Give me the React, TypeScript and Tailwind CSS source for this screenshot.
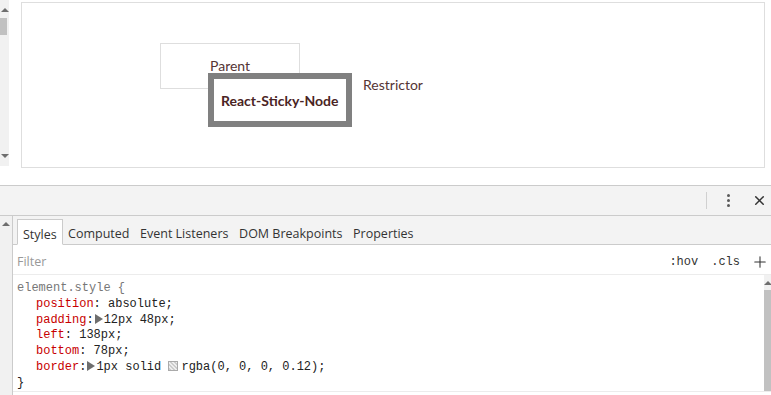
import { X, Plus } from "lucide-react";

const tabs = ["Styles", "Computed", "Event Listeners", "DOM Breakpoints", "Properties"];

const rules: [string, React.ReactNode][] = [
  ["position", <>: absolute;</>],
  [
    "padding",
    <>
      :<Arrow />12px 48px;
    </>,
  ],
  ["left", <>: 138px;</>],
  ["bottom", <>: 78px;</>],
  [
    "border",
    <>
      :<Arrow />1px solid <Swatch />rgba(0, 0, 0, 0.12);
    </>,
  ],
];

function Arrow() {
  return <span className="inline-block w-0 h-0 border-y-[5px] border-y-transparent border-l-[8px] border-l-[#6e6e6e] mx-[1px] align-[-1px]" />;
}

function Swatch() {
  return (
    <span className="inline-block w-[10px] h-[10px] mr-[3px] border border-[#aaa] bg-[linear-gradient(45deg,#ccc_25%,#eee_25%,#eee_50%,#ccc_50%,#ccc_75%,#eee_75%)] bg-[length:4px_4px] align-[-1px]" />
  );
}

function ScrollUp({ className = "" }: { className?: string }) {
  return <span className={`block w-0 h-0 border-x-[4px] border-x-transparent border-b-[4px] border-b-[#6e6e6e] ${className}`} />;
}

function Demo() {
  return (
    <div className="flex h-[185px] bg-white">
      <div className="w-[9px] h-[166px] bg-[#f1f1f1] flex flex-col">
        <ScrollUp className="mt-[8px] ml-[1px]" />
        <div className="mt-[6px] w-[7px] h-[17px] bg-[#c1c1c1]" />
        <div className="flex-1" />
        <span className="block w-0 h-0 border-x-[4px] border-x-transparent border-t-[4px] border-t-[#6e6e6e] mb-[8px] ml-[1px]" />
      </div>
      <div className="ml-[12px] mt-[2px] w-[744px] h-[166px] border border-[#dedede] relative font-['Lato',sans-serif] text-[14px] text-[#553535]">
        <div className="absolute left-[138px] top-[40px] w-[140px] h-[46px] border border-[#dedede] flex items-center pl-[49px] pb-[1px]">
          Parent
        </div>
        <div className="absolute left-[186px] top-[70px] w-[144px] h-[54px] border-[6px] border-[#808080] bg-white flex items-center pl-[7px] font-bold text-[#4a2424]">
          React-Sticky-Node
        </div>
        <div className="absolute left-[341px] top-[71px]">Restrictor</div>
      </div>
    </div>
  );
}

function Toolbar() {
  return (
    <div className="h-[31px] border-t border-[#cbcbcb] border-b bg-[#f3f3f3] flex items-center justify-end">
      <div className="w-px h-[17px] bg-[#d0d0d0] mr-[20px]" />
      <div className="flex flex-col gap-[2px] mr-[22px]">
        <span className="w-[3px] h-[3px] rounded-full bg-[#5a5a5a]" />
        <span className="w-[3px] h-[3px] rounded-full bg-[#5a5a5a]" />
        <span className="w-[3px] h-[3px] rounded-full bg-[#5a5a5a]" />
      </div>
      <X size={15} strokeWidth={2.4} className="text-[#333] mr-[4px]" />
    </div>
  );
}

function StylesPanel() {
  return (
    <div className="flex flex-1 min-w-0 flex-col">
      <div className="h-[29px] bg-[#f3f3f3] border-b border-[#cbcbcb] flex items-end pl-[4px] font-['Open_Sans',sans-serif] text-[12.5px] text-[#333]">
        {tabs.map((t, i) => (
          <div
            key={t}
            className={
              i === 0
                ? "h-[26px] px-[5px] pt-[6px] mb-[-1px] bg-white border border-[#cbcbcb] border-b-white flex items-center"
                : "h-[26px] px-[5.3px] pt-[6px] flex items-center"
            }
          >
            {t}
          </div>
        ))}
      </div>
      <div className="h-[30px] pt-[5px] border-b border-[#ececec] flex items-center pl-[4px] pr-[2px] text-[12px]">
        <span className="font-['Open_Sans',sans-serif] text-[12.5px] text-[#999]">Filter</span>
        <span className="flex-1" />
        <span className="font-['Liberation_Mono',monospace] text-[12px] text-[#333]">:hov</span>
        <span className="ml-[13px] font-['Liberation_Mono',monospace] text-[12px] text-[#333]">.cls</span>
        <Plus size={18} strokeWidth={1.4} className="ml-[11px] text-[#333]" />
      </div>
      <div className="flex h-[117px] border-b border-[#ececec]">
        <div className="flex-1 pl-[4px] pt-[6px] font-['Liberation_Mono',monospace] text-[12px] leading-[15.8px] text-[#222]">
          <div className="text-[#777]">element.style {"{"}</div>
          {rules.map(([name, val]) => (
            <div key={name} className="pl-[19px] whitespace-pre">
              <span className="text-[#c80000]">{name}</span>
              {val}
            </div>
          ))}
          <div>{"}"}</div>
        </div>
        <div className="w-[7px] bg-[#f1f1f1] flex flex-col items-center">
          <ScrollUp className="mt-[6px]" />
          <div className="mt-[5px] w-[7px] flex-1 bg-[#c1c1c1]" />
        </div>
      </div>
    </div>
  );
}

export default function App() {
  return (
    <div className="w-[771px] h-[395px] overflow-hidden bg-white flex flex-col">
      <Demo />
      <Toolbar />
      <div className="flex flex-1">
        <div className="w-[12px] bg-[#f1f1f1] border-r border-[#cbcbcb] box-content">
          <ScrollUp className="mt-[6px] ml-[2px]" />
        </div>
        <StylesPanel />
      </div>
    </div>
  );
}
